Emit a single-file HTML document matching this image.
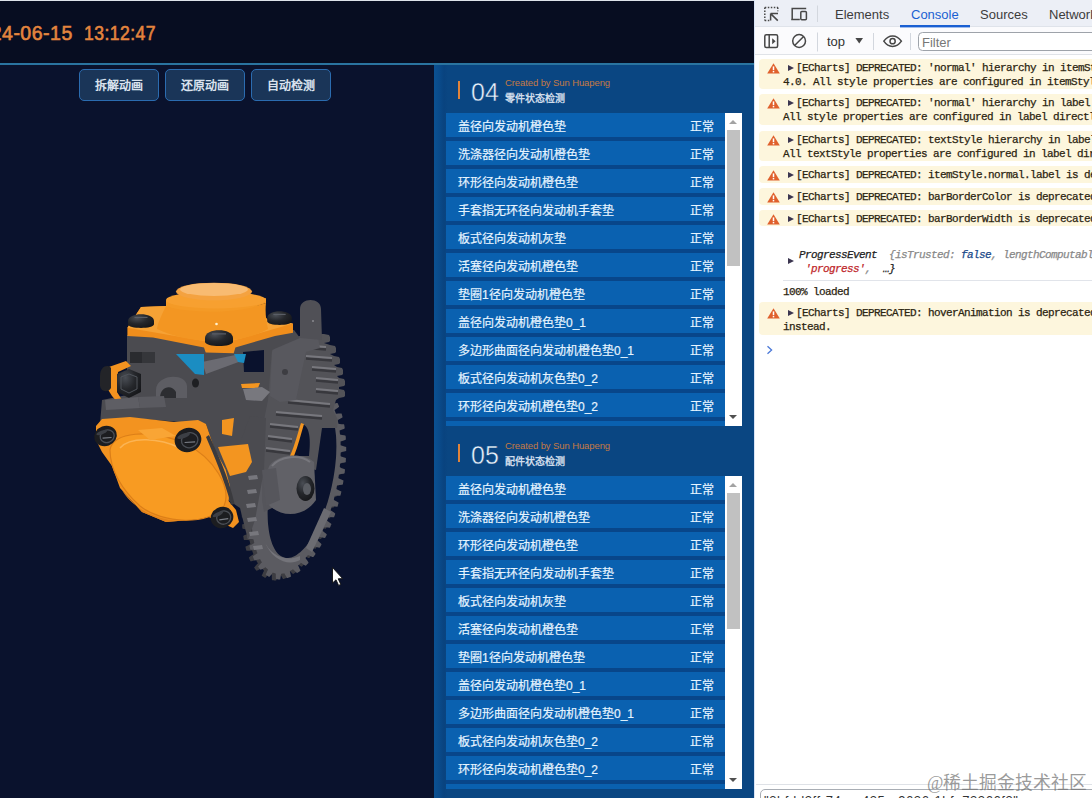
<!DOCTYPE html>
<html lang="zh-CN">
<head>
<meta charset="utf-8">
<style>
*{margin:0;padding:0;box-sizing:border-box}
html,body{width:1092px;height:798px;overflow:hidden;background:#0a122d;font-family:"Liberation Sans",sans-serif}
.abs{position:absolute}
#hdr{left:0;top:0;width:754px;height:63px;background:#070d21;border-top:1px solid #dde2ea}
#line{left:0;top:63px;width:754px;height:2px;background:#2a74a0}
.date{letter-spacing:0.5px;font-size:19.5px;font-weight:normal;-webkit-text-stroke:0.6px #e4853e;color:#e4853e;white-space:pre;transform:scaleX(0.9);transform-origin:0 0}
.btn{top:69px;width:80px;height:32px;border:1px solid #2b6cb0;border-radius:5px;background:#1a3558;color:#d9e2ee;font-size:12px;font-weight:bold;text-align:center;line-height:33px}
#panel{left:434px;top:65px;width:320px;height:733px;background:linear-gradient(90deg,#0b5192 0,#0a4b8b 5px,#09437f 10px,#0a4682 14px,#0a4682 100%)}
.sec-bar{width:2.2px;height:18px;background:#e0833a}
.sec-num{font-size:25px;color:#e8f2fb;line-height:1;-webkit-text-stroke:0.45px #0a4682}
.sec-by{font-size:9.5px;color:#c47a45;letter-spacing:-0.1px;white-space:nowrap;line-height:1}
.sec-tt{font-size:10px;color:#cfdceb;font-weight:bold;white-space:nowrap;line-height:1;margin-top:2px}
.list{left:446px;width:296px;height:313px;overflow:hidden;background:#08468a}
.row{position:absolute;left:0;width:279px;height:24px;background:#0a61b0;color:#e6f4ff;font-size:12px;line-height:24px;-webkit-text-stroke:0.2px #e6f4ff}
.row .n{position:absolute;left:12px;top:2px;white-space:nowrap}
.row .s{position:absolute;right:11px;top:2px}
.sb{position:absolute;left:279px;top:0;width:17px;height:313px;background:#fff}
.thumb{position:absolute;left:2px;top:17px;width:13px;height:136px;background:#c1c1c1}
.up{position:absolute;left:4px;top:7px;width:0;height:0;border-left:4px solid transparent;border-right:4px solid transparent;border-bottom:4px solid #a3a3a3}
.dn{position:absolute;left:4px;bottom:7px;width:0;height:0;border-left:4px solid transparent;border-right:4px solid transparent;border-top:4px solid #505050}
#dt{left:754px;top:0;width:338px;height:798px;background:#fff;overflow:hidden}
.tab{font-size:13px;white-space:nowrap}
.msg{left:5px;width:400px;background:#fdf6dd;border-radius:4px}
.mono{font-family:"Liberation Mono",monospace;font-size:11px;letter-spacing:-0.6px;white-space:pre;color:#2b2410;line-height:14px;-webkit-text-stroke:0.25px currentColor}
</style>
</head>
<body>
<div id="hdr" class="abs"></div>
<div id="line" class="abs"></div>
<div class="abs date" style="left:-32px;top:22px;transform:none">2024-06-15</div><div class="abs date" style="left:84px;top:22px">13:12:47</div>
<div class="btn abs" style="left:79px">拆解动画</div>
<div class="btn abs" style="left:165px">还原动画</div>
<div class="btn abs" style="left:251px">自动检测</div>

<div id="panel" class="abs"></div>

<!-- MODEL -->
<svg class="abs" style="left:0;top:0" width="434" height="798" viewBox="0 0 434 798">
<defs><linearGradient id="og" x1="0" y1="0" x2="1" y2="1"><stop offset="0" stop-color="#f99d28"/><stop offset="1" stop-color="#ef8c1a"/></linearGradient><radialGradient id="bl" cx="0.35" cy="0.3" r="0.8"><stop offset="0" stop-color="#4a4e55"/><stop offset="0.5" stop-color="#25272b"/><stop offset="1" stop-color="#141518"/></radialGradient></defs>
<path d="M337.4 492.6 L337.3 493.2 L337.1 493.8 L337.0 494.4 L336.9 495.0 L336.7 495.6 L336.6 496.2 L336.1 496.8 L333.5 496.8 L330.9 496.8 L330.6 497.3 L330.5 497.9 L330.3 498.5 L330.2 499.1 L330.0 499.7 L329.9 500.3 L330.0 500.9 L332.3 502.2 L334.5 503.4 L334.5 504.1 L334.4 504.7 L334.2 505.3 L334.0 505.9 L333.9 506.5 L333.7 507.1 L333.5 507.7 L330.9 507.5 L328.3 507.4 L327.7 507.8 L327.5 508.4 L327.4 509.0 L327.2 509.6 L327.0 510.1 L326.8 510.7 L326.6 511.3 L328.5 512.5 L330.7 513.9 L331.3 514.7 L331.1 515.3 L330.9 515.9 L330.7 516.5 L330.5 517.0 L330.3 517.6 L330.1 518.2 L328.4 518.2 L325.9 517.9 L324.3 518.0 L324.1 518.5 L323.9 519.1 L323.7 519.6 L323.4 520.2 L323.2 520.7 L323.0 521.3 L323.5 522.1 L325.5 523.5 L327.5 524.9 L327.3 525.5 L327.0 526.1 L326.8 526.6 L326.6 527.1 L326.4 527.7 L326.1 528.2 L325.9 528.8 L323.9 528.6 L321.5 528.2 L320.2 528.2 L319.9 528.7 L319.7 529.2 L319.5 529.7 L319.2 530.2 L319.0 530.7 L318.8 531.3 L318.8 531.9 L320.6 533.4 L322.5 534.9 L322.8 535.7 L322.5 536.2 L322.3 536.7 L322.0 537.2 L321.7 537.7 L321.5 538.2 L321.2 538.7 L320.5 539.0 L318.3 538.4 L316.0 537.9 L315.3 538.1 L315.1 538.6 L314.8 539.1 L314.6 539.6 L314.3 540.0 L314.1 540.5 L313.8 541.0 L313.7 541.5 L315.3 543.0 L317.0 544.6 L317.5 545.5 L317.3 546.0 L317.0 546.5 L316.7 546.9 L316.4 547.4 L316.2 547.9 L315.9 548.3 L315.6 548.8 L314.3 548.5 L312.2 547.9 L310.1 547.2 L309.9 547.6 L309.6 548.0 L309.3 548.4 L309.0 548.9 L308.8 549.3 L308.5 549.7 L308.2 550.1 L308.0 550.5 L309.0 551.8 L310.4 553.3 L311.6 554.8 L311.3 555.2 L311.1 555.7 L310.8 556.1 L310.5 556.5 L310.2 556.9 L309.9 557.3 L309.6 557.7 L309.3 558.1 L308.3 557.9 L306.4 557.1 L304.6 556.2 L303.8 556.2 L303.5 556.5 L303.2 556.9 L302.9 557.2 L302.6 557.6 L302.4 557.9 L302.1 558.3 L301.8 558.6 L301.5 558.9 L302.1 560.1 L303.3 561.6 L304.4 563.2 L304.5 563.9 L304.2 564.3 L303.9 564.6 L303.6 564.9 L303.2 565.3 L302.9 565.6 L302.6 565.9 L302.3 566.2 L302.0 566.5 L301.5 566.7 L299.9 565.7 L298.4 564.7 L296.9 563.8 L296.7 564.1 L296.4 564.4 L296.1 564.7 L295.8 564.9 L295.5 565.2 L295.2 565.4 L294.9 565.7 L294.6 565.9 L294.4 566.2 L294.1 566.4 L294.8 567.8 L295.5 569.4 L296.3 570.9 L296.4 571.7 L296.1 571.9 L295.8 572.2 L295.5 572.4 L295.1 572.7 L294.8 572.9 L294.5 573.1 L294.2 573.4 L293.9 573.6 L293.6 573.8 L293.2 574.0 L292.3 573.4 L291.2 572.3 L290.0 571.2 L289.0 570.2 L288.7 570.4 L288.4 570.6 L288.2 570.8 L287.9 570.9 L287.6 571.1 L287.3 571.3 L287.1 571.4 L286.8 571.6 L286.5 571.7 L286.3 571.9 L286.0 572.0 L285.9 572.6 L286.3 574.0 L286.6 575.4 L286.9 576.8 L286.9 577.7 L286.6 577.8 L286.3 577.9 L286.0 578.1 L285.7 578.2 L285.4 578.3 L285.1 578.5 L284.8 578.6 L284.4 578.7 L284.1 578.8 L283.8 578.9 L283.5 579.0 L283.2 579.1 L282.6 578.4 L282.0 577.2 L281.3 576.0 L280.7 574.9 L280.3 574.2 L280.0 574.3 L279.8 574.4 L279.5 574.4 L279.3 574.5 L279.0 574.5 L278.8 574.6 L278.6 574.6 L278.3 574.6 L278.1 574.7 L277.8 574.7 L277.6 574.7 L277.4 574.8 L277.1 574.8 L277.0 575.6 L276.8 576.9 L276.6 578.1 L276.4 579.3 L276.2 580.4 L275.9 580.4 L275.6 580.4 L275.3 580.4 L275.0 580.4 L274.7 580.4 L274.4 580.4 L274.1 580.4 L273.8 580.3 L273.5 580.3 L273.2 580.3 L272.9 580.3 L272.6 580.2 L272.3 580.2 L272.0 580.1 L271.9 579.4 L271.8 578.1 L271.8 576.9 L271.8 575.7 L271.8 574.5 L271.6 574.5 L271.4 574.4 L271.2 574.4 L270.9 574.3 L270.7 574.2 L270.5 574.2 L270.3 574.1 L270.1 574.0 L269.9 574.0 L269.7 573.9 L269.5 573.8 L269.3 573.7 L269.1 573.7 L268.9 573.6 L268.5 573.9 L267.8 574.9 L267.0 575.9 L266.2 576.9 L265.4 577.8 L265.1 577.9 L264.8 577.7 L264.6 577.6 L264.3 577.4 L264.0 577.3 L263.8 577.1 L263.5 577.0 L263.3 576.8 L263.0 576.6 L262.7 576.5 L262.5 576.3 L262.2 576.1 L262.0 575.9 L261.7 575.7 L262.1 574.7 L262.7 573.5 L263.2 572.3 L263.8 571.2 L264.0 570.5 L263.8 570.4 L263.6 570.2 L263.4 570.0 L263.2 569.8 L263.0 569.7 L262.8 569.5 L262.6 569.3 L262.4 569.1 L262.2 568.9 L262.0 568.7 L261.9 568.5 L261.7 568.3 L261.0 568.6 L259.7 569.3 L258.5 569.9 L257.2 570.6 L256.5 570.7 L256.3 570.5 L256.0 570.2 L255.8 569.9 L255.6 569.7 L255.4 569.4 L255.2 569.1 L255.0 568.8 L254.8 568.5 L254.5 568.2 L254.3 567.9 L254.1 567.6 L254.6 566.9 L255.6 565.7 L256.7 564.6 L257.8 563.5 L257.8 563.1 L257.6 562.9 L257.4 562.6 L257.3 562.3 L257.1 562.0 L256.9 561.7 L256.7 561.4 L256.6 561.1 L256.4 560.8 L256.2 560.5 L256.1 560.1 L254.8 560.4 L253.1 560.8 L251.5 561.2 L250.5 561.2 L250.3 560.9 L250.1 560.5 L249.9 560.1 L249.8 559.8 L249.6 559.4 L249.4 559.0 L249.3 558.6 L249.1 558.2 L248.9 557.8 L248.9 557.4 L250.4 556.3 L251.9 555.3 L253.4 554.3 L253.3 553.9 L253.2 553.5 L253.0 553.1 L252.9 552.8 L252.7 552.4 L252.6 552.0 L252.5 551.6 L252.3 551.2 L252.2 550.8 L251.6 550.5 L249.7 550.7 L247.8 550.8 L246.4 550.7 L246.3 550.3 L246.2 549.9 L246.0 549.4 L245.9 549.0 L245.8 548.5 L245.7 548.1 L245.6 547.6 L245.4 547.1 L245.6 546.6 L247.4 545.7 L249.2 544.8 L250.3 544.0 L250.2 543.6 L250.1 543.1 L250.0 542.7 L249.9 542.2 L249.8 541.8 L249.7 541.3 L249.6 540.8 L249.6 540.4 L248.2 540.1 L246.1 540.0 L244.0 539.9 L243.8 539.4 L243.7 538.9 L243.6 538.4 L243.5 537.9 L243.5 537.4 L243.4 536.9 L243.3 536.4 L243.2 535.9 L244.3 535.2 L246.4 534.4 L248.4 533.6 L248.4 533.1 L248.3 532.6 L248.3 532.1 L248.2 531.6 L248.2 531.1 L248.1 530.6 L248.0 530.1 L248.0 529.6 L245.9 529.2 L243.7 528.9 L242.4 528.5 L242.3 527.9 L242.3 527.4 L242.2 526.8 L242.2 526.3 L242.2 525.7 L242.1 525.2 L242.1 524.6 L243.5 524.0 L245.7 523.3 L247.5 522.7 L247.5 522.2 L247.4 521.6 L247.4 521.1 L247.4 520.5 L247.4 520.0 L247.4 519.4 L247.3 518.9 L245.9 518.4 L243.6 517.8 L241.8 517.3 L241.8 516.7 L241.8 516.1 L241.8 515.6 L241.8 515.0 L241.8 514.4 L241.8 513.8 L241.8 513.2 L243.8 512.7 L246.2 512.1 L247.3 511.6 L247.3 511.0 L247.4 510.5 L247.4 509.9 L247.4 509.3 L247.4 508.7 L247.4 508.2 L246.9 507.6 L244.5 506.9 L242.1 506.2 L242.1 505.6 L242.1 505.0 L242.1 504.4 L242.2 503.8 L242.2 503.2 L242.2 502.6 L242.3 502.0 L244.4 501.5 L246.9 501.1 L247.9 500.6 L248.0 500.0 L248.0 499.4 L248.1 498.8 L248.1 498.2 L248.2 497.7 L248.2 497.1 L246.9 496.3 L244.5 495.5 L242.9 494.7 L243.0 494.1 L243.1 493.5 L243.2 492.9 L243.2 492.2 L243.3 491.6 L243.4 491.0 L244.4 490.5 L246.9 490.2 L249.1 489.9 L249.2 489.3 L249.2 488.7 L249.3 488.1 L249.4 487.5 L249.5 486.9 L249.6 486.3 L249.1 485.6 L246.7 484.6 L244.5 483.7 L244.6 483.0 L244.7 482.4 L244.8 481.8 L244.9 481.2 L245.0 480.6 L245.1 480.0 L245.7 479.4 L248.3 479.3 L250.8 479.2 L251.0 478.6 L251.1 478.0 L251.2 477.4 L251.3 476.8 L251.4 476.2 L251.6 475.6 L251.3 474.9 L248.9 473.8 L246.6 472.6 L246.7 472.0 L246.9 471.4 L247.0 470.8 L247.1 470.2 L247.3 469.6 L247.4 469.0 L247.9 468.4 L250.5 468.4 L253.1 468.4 L253.4 467.9 L253.5 467.3 L253.7 466.7 L253.8 466.1 L254.0 465.5 L254.1 464.9 L254.0 464.3 L251.7 463.0 L249.5 461.8 L249.5 461.1 L249.6 460.5 L249.8 459.9 L250.0 459.3 L250.1 458.7 L250.3 458.1 L250.5 457.5 L253.1 457.7 L255.7 457.8 L256.3 457.4 L256.5 456.8 L256.6 456.2 L256.8 455.6 L257.0 455.1 L257.2 454.5 L257.4 453.9 L255.5 452.7 L253.3 451.3 L252.7 450.5 L252.9 449.9 L253.1 449.3 L253.3 448.7 L253.5 448.2 L253.7 447.6 L253.9 447.0 L255.6 447.0 L258.1 447.3 L259.7 447.2 L259.9 446.7 L260.1 446.1 L260.3 445.6 L260.6 445.0 L260.8 444.5 L261.0 443.9 L260.5 443.1 L258.5 441.7 L256.5 440.3 L256.7 439.7 L257.0 439.1 L257.2 438.6 L257.4 438.1 L257.6 437.5 L257.9 437.0 L258.1 436.4 L260.1 436.6 L262.5 437.0 L263.8 437.0 L264.1 436.5 L264.3 436.0 L264.5 435.5 L264.8 435.0 L265.0 434.5 L265.2 433.9 L265.2 433.3 L263.4 431.8 L261.5 430.3 L261.2 429.5 L261.5 429.0 L261.7 428.5 L262.0 428.0 L262.3 427.5 L262.5 427.0 L262.8 426.5 L263.5 426.2 L265.7 426.8 L268.0 427.3 L268.7 427.1 L268.9 426.6 L269.2 426.1 L269.4 425.6 L269.7 425.2 L269.9 424.7 L270.2 424.2 L270.3 423.7 L268.7 422.2 L267.0 420.6 L266.5 419.7 L266.7 419.2 L267.0 418.7 L267.3 418.3 L267.6 417.8 L267.8 417.3 L268.1 416.9 L268.4 416.4 L269.7 416.7 L271.8 417.3 L273.9 418.0 L274.1 417.6 L274.4 417.2 L274.7 416.8 L275.0 416.3 L275.2 415.9 L275.5 415.5 L275.8 415.1 L276.0 414.7 L275.0 413.4 L273.6 411.9 L272.4 410.4 L272.7 410.0 L272.9 409.5 L273.2 409.1 L273.5 408.7 L273.8 408.3 L274.1 407.9 L274.4 407.5 L274.7 407.1 L275.7 407.3 L277.6 408.1 L279.4 409.0 L280.2 409.0 L280.5 408.7 L280.8 408.3 L281.1 408.0 L281.4 407.6 L281.6 407.3 L281.9 406.9 L282.2 406.6 L282.5 406.3 L281.9 405.1 L280.7 403.6 L279.6 402.0 L279.5 401.3 L279.8 400.9 L280.1 400.6 L280.4 400.3 L280.8 399.9 L281.1 399.6 L281.4 399.3 L281.7 399.0 L282.0 398.7 L282.5 398.5 L284.1 399.5 L285.6 400.5 L287.1 401.4 L287.3 401.1 L287.6 400.8 L287.9 400.5 L288.2 400.3 L288.5 400.0 L288.8 399.8 L289.1 399.5 L289.4 399.3 L289.6 399.0 L289.9 398.8 L289.2 397.4 L288.5 395.8 L287.7 394.3 L287.6 393.5 L287.9 393.3 L288.2 393.0 L288.5 392.8 L288.9 392.5 L289.2 392.3 L289.5 392.1 L289.8 391.8 L290.1 391.6 L290.4 391.4 L290.8 391.2 L291.7 391.8 L292.8 392.9 L294.0 394.0 L295.0 395.0 L295.3 394.8 L295.6 394.6 L295.8 394.4 L296.1 394.3 L296.4 394.1 L296.7 393.9 L296.9 393.8 L297.2 393.6 L297.5 393.5 L297.7 393.3 L298.0 393.2 L298.1 392.6 L297.7 391.2 L297.4 389.8 L297.1 388.4 L297.1 387.5 L297.4 387.4 L297.7 387.3 L298.0 387.1 L298.3 387.0 L298.6 386.9 L298.9 386.7 L299.2 386.6 L299.6 386.5 L299.9 386.4 L300.2 386.3 L300.5 386.2 L300.8 386.1 L301.4 386.8 L302.0 388.0 L302.7 389.2 L303.3 390.3 L303.7 391.0 L304.0 390.9 L304.2 390.8 L304.5 390.8 L304.7 390.7 L305.0 390.7 L305.2 390.6 L305.4 390.6 L305.7 390.6 L305.9 390.5 L306.2 390.5 L306.4 390.5 L306.6 390.4 L306.9 390.4 L307.0 389.6 L307.2 388.3 L307.4 387.1 L307.6 385.9 L307.8 384.8 L308.1 384.8 L308.4 384.8 L308.7 384.8 L309.0 384.8 L309.3 384.8 L309.6 384.8 L309.9 384.8 L310.2 384.9 L310.5 384.9 L310.8 384.9 L311.1 384.9 L311.4 385.0 L311.7 385.0 L312.0 385.1 L312.1 385.8 L312.2 387.1 L312.2 388.3 L312.2 389.5 L312.2 390.7 L312.4 390.7 L312.6 390.8 L312.8 390.8 L313.1 390.9 L313.3 391.0 L313.5 391.0 L313.7 391.1 L313.9 391.2 L314.1 391.2 L314.3 391.3 L314.5 391.4 L314.7 391.5 L314.9 391.5 L315.1 391.6 L315.5 391.3 L316.2 390.3 L317.0 389.3 L317.8 388.3 L318.6 387.4 L318.9 387.3 L319.2 387.5 L319.4 387.6 L319.7 387.8 L320.0 387.9 L320.2 388.1 L320.5 388.2 L320.7 388.4 L321.0 388.6 L321.3 388.7 L321.5 388.9 L321.8 389.1 L322.0 389.3 L322.3 389.5 L321.9 390.5 L321.3 391.7 L320.8 392.9 L320.2 394.0 L320.0 394.7 L320.2 394.8 L320.4 395.0 L320.6 395.2 L320.8 395.4 L321.0 395.5 L321.2 395.7 L321.4 395.9 L321.6 396.1 L321.8 396.3 L322.0 396.5 L322.1 396.7 L322.3 396.9 L323.0 396.6 L324.3 395.9 L325.5 395.3 L326.8 394.6 L327.5 394.5 L327.7 394.7 L328.0 395.0 L328.2 395.3 L328.4 395.5 L328.6 395.8 L328.8 396.1 L329.0 396.4 L329.2 396.7 L329.5 397.0 L329.7 397.3 L329.9 397.6 L329.4 398.3 L328.4 399.5 L327.3 400.6 L326.2 401.7 L326.2 402.1 L326.4 402.3 L326.6 402.6 L326.7 402.9 L326.9 403.2 L327.1 403.5 L327.3 403.8 L327.4 404.1 L327.6 404.4 L327.8 404.7 L327.9 405.1 L329.2 404.8 L330.9 404.4 L332.5 404.0 L333.5 404.0 L333.7 404.3 L333.9 404.7 L334.1 405.1 L334.2 405.4 L334.4 405.8 L334.6 406.2 L334.7 406.6 L334.9 407.0 L335.1 407.4 L335.1 407.8 L333.6 408.9 L332.1 409.9 L330.6 410.9 L330.7 411.3 L330.8 411.7 L331.0 412.1 L331.1 412.4 L331.3 412.8 L331.4 413.2 L331.5 413.6 L331.7 414.0 L331.8 414.4 L332.4 414.7 L334.3 414.5 L336.2 414.4 L337.6 414.5 L337.7 414.9 L337.8 415.3 L338.0 415.8 L338.1 416.2 L338.2 416.7 L338.3 417.1 L338.4 417.6 L338.6 418.1 L338.4 418.6 L336.6 419.5 L334.8 420.4 L333.7 421.2 L333.8 421.6 L333.9 422.1 L334.0 422.5 L334.1 423.0 L334.2 423.4 L334.3 423.9 L334.4 424.4 L334.4 424.8 L335.8 425.1 L337.9 425.2 L340.0 425.3 L340.2 425.8 L340.3 426.3 L340.4 426.8 L340.5 427.3 L340.5 427.8 L340.6 428.3 L340.7 428.8 L340.8 429.3 L339.7 430.0 L337.6 430.8 L335.6 431.6 L335.6 432.1 L335.7 432.6 L335.7 433.1 L335.8 433.6 L335.8 434.1 L335.9 434.6 L336.0 435.1 L336.0 435.6 L338.1 436.0 L340.3 436.3 L341.6 436.7 L341.7 437.3 L341.7 437.8 L341.8 438.4 L341.8 438.9 L341.8 439.5 L341.9 440.0 L341.9 440.6 L340.5 441.2 L338.3 441.9 L336.5 442.5 L336.5 443.0 L336.6 443.6 L336.6 444.1 L336.6 444.7 L336.6 445.2 L336.6 445.8 L336.7 446.3 L338.1 446.8 L340.4 447.4 L342.2 447.9 L342.2 448.5 L342.2 449.1 L342.2 449.6 L342.2 450.2 L342.2 450.8 L342.2 451.4 L342.2 452.0 L340.2 452.5 L337.8 453.1 L336.7 453.6 L336.7 454.2 L336.6 454.7 L336.6 455.3 L336.6 455.9 L336.6 456.5 L336.6 457.0 L337.1 457.6 L339.5 458.3 L341.9 459.0 L341.9 459.6 L341.9 460.2 L341.9 460.8 L341.8 461.4 L341.8 462.0 L341.8 462.6 L341.7 463.2 L339.6 463.7 L337.1 464.1 L336.1 464.6 L336.0 465.2 L336.0 465.8 L335.9 466.4 L335.9 467.0 L335.8 467.5 L335.8 468.1 L337.1 468.9 L339.5 469.7 L341.1 470.5 L341.0 471.1 L340.9 471.7 L340.8 472.3 L340.8 473.0 L340.7 473.6 L340.6 474.2 L339.6 474.7 L337.1 475.0 L334.9 475.3 L334.8 475.9 L334.8 476.5 L334.7 477.1 L334.6 477.7 L334.5 478.3 L334.4 478.9 L334.9 479.6 L337.3 480.6 L339.5 481.5 L339.4 482.2 L339.3 482.8 L339.2 483.4 L339.1 484.0 L339.0 484.6 L338.9 485.2 L338.3 485.8 L335.7 485.9 L333.2 486.0 L333.0 486.6 L332.9 487.2 L332.8 487.8 L332.7 488.4 L332.6 489.0 L332.4 489.6 L332.7 490.3 L335.1 491.4Z" fill="#3d3d42"/>
<path d="M341.4 491.6 L341.3 492.2 L341.1 492.8 L341.0 493.4 L340.9 494.0 L340.7 494.6 L340.6 495.2 L340.1 495.8 L337.5 495.8 L334.9 495.8 L334.6 496.3 L334.5 496.9 L334.3 497.5 L334.2 498.1 L334.0 498.7 L333.9 499.3 L334.0 499.9 L336.3 501.2 L338.5 502.4 L338.5 503.1 L338.4 503.7 L338.2 504.3 L338.0 504.9 L337.9 505.5 L337.7 506.1 L337.5 506.7 L334.9 506.5 L332.3 506.4 L331.7 506.8 L331.5 507.4 L331.4 508.0 L331.2 508.6 L331.0 509.1 L330.8 509.7 L330.6 510.3 L332.5 511.5 L334.7 512.9 L335.3 513.7 L335.1 514.3 L334.9 514.9 L334.7 515.5 L334.5 516.0 L334.3 516.6 L334.1 517.2 L332.4 517.2 L329.9 516.9 L328.3 517.0 L328.1 517.5 L327.9 518.1 L327.7 518.6 L327.4 519.2 L327.2 519.7 L327.0 520.3 L327.5 521.1 L329.5 522.5 L331.5 523.9 L331.3 524.5 L331.0 525.1 L330.8 525.6 L330.6 526.1 L330.4 526.7 L330.1 527.2 L329.9 527.8 L327.9 527.6 L325.5 527.2 L324.2 527.2 L323.9 527.7 L323.7 528.2 L323.5 528.7 L323.2 529.2 L323.0 529.7 L322.8 530.3 L322.8 530.9 L324.6 532.4 L326.5 533.9 L326.8 534.7 L326.5 535.2 L326.3 535.7 L326.0 536.2 L325.7 536.7 L325.5 537.2 L325.2 537.7 L324.5 538.0 L322.3 537.4 L320.0 536.9 L319.3 537.1 L319.1 537.6 L318.8 538.1 L318.6 538.6 L318.3 539.0 L318.1 539.5 L317.8 540.0 L317.7 540.5 L319.3 542.0 L321.0 543.6 L321.5 544.5 L321.3 545.0 L321.0 545.5 L320.7 545.9 L320.4 546.4 L320.2 546.9 L319.9 547.3 L319.6 547.8 L318.3 547.5 L316.2 546.9 L314.1 546.2 L313.9 546.6 L313.6 547.0 L313.3 547.4 L313.0 547.9 L312.8 548.3 L312.5 548.7 L312.2 549.1 L312.0 549.5 L313.0 550.8 L314.4 552.3 L315.6 553.8 L315.3 554.2 L315.1 554.7 L314.8 555.1 L314.5 555.5 L314.2 555.9 L313.9 556.3 L313.6 556.7 L313.3 557.1 L312.3 556.9 L310.4 556.1 L308.6 555.2 L307.8 555.2 L307.5 555.5 L307.2 555.9 L306.9 556.2 L306.6 556.6 L306.4 556.9 L306.1 557.3 L305.8 557.6 L305.5 557.9 L306.1 559.1 L307.3 560.6 L308.4 562.2 L308.5 562.9 L308.2 563.3 L307.9 563.6 L307.6 563.9 L307.2 564.3 L306.9 564.6 L306.6 564.9 L306.3 565.2 L306.0 565.5 L305.5 565.7 L303.9 564.7 L302.4 563.7 L300.9 562.8 L300.7 563.1 L300.4 563.4 L300.1 563.7 L299.8 563.9 L299.5 564.2 L299.2 564.4 L298.9 564.7 L298.6 564.9 L298.4 565.2 L298.1 565.4 L298.8 566.8 L299.5 568.4 L300.3 569.9 L300.4 570.7 L300.1 570.9 L299.8 571.2 L299.5 571.4 L299.1 571.7 L298.8 571.9 L298.5 572.1 L298.2 572.4 L297.9 572.6 L297.6 572.8 L297.2 573.0 L296.3 572.4 L295.2 571.3 L294.0 570.2 L293.0 569.2 L292.7 569.4 L292.4 569.6 L292.2 569.8 L291.9 569.9 L291.6 570.1 L291.3 570.3 L291.1 570.4 L290.8 570.6 L290.5 570.7 L290.3 570.9 L290.0 571.0 L289.9 571.6 L290.3 573.0 L290.6 574.4 L290.9 575.8 L290.9 576.7 L290.6 576.8 L290.3 576.9 L290.0 577.1 L289.7 577.2 L289.4 577.3 L289.1 577.5 L288.8 577.6 L288.4 577.7 L288.1 577.8 L287.8 577.9 L287.5 578.0 L287.2 578.1 L286.6 577.4 L286.0 576.2 L285.3 575.0 L284.7 573.9 L284.3 573.2 L284.0 573.3 L283.8 573.4 L283.5 573.4 L283.3 573.5 L283.0 573.5 L282.8 573.6 L282.6 573.6 L282.3 573.6 L282.1 573.7 L281.8 573.7 L281.6 573.7 L281.4 573.8 L281.1 573.8 L281.0 574.6 L280.8 575.9 L280.6 577.1 L280.4 578.3 L280.2 579.4 L279.9 579.4 L279.6 579.4 L279.3 579.4 L279.0 579.4 L278.7 579.4 L278.4 579.4 L278.1 579.4 L277.8 579.3 L277.5 579.3 L277.2 579.3 L276.9 579.3 L276.6 579.2 L276.3 579.2 L276.0 579.1 L275.9 578.4 L275.8 577.1 L275.8 575.9 L275.8 574.7 L275.8 573.5 L275.6 573.5 L275.4 573.4 L275.2 573.4 L274.9 573.3 L274.7 573.2 L274.5 573.2 L274.3 573.1 L274.1 573.0 L273.9 573.0 L273.7 572.9 L273.5 572.8 L273.3 572.7 L273.1 572.7 L272.9 572.6 L272.5 572.9 L271.8 573.9 L271.0 574.9 L270.2 575.9 L269.4 576.8 L269.1 576.9 L268.8 576.7 L268.6 576.6 L268.3 576.4 L268.0 576.3 L267.8 576.1 L267.5 576.0 L267.3 575.8 L267.0 575.6 L266.7 575.5 L266.5 575.3 L266.2 575.1 L266.0 574.9 L265.7 574.7 L266.1 573.7 L266.7 572.5 L267.2 571.3 L267.8 570.2 L268.0 569.5 L267.8 569.4 L267.6 569.2 L267.4 569.0 L267.2 568.8 L267.0 568.7 L266.8 568.5 L266.6 568.3 L266.4 568.1 L266.2 567.9 L266.0 567.7 L265.9 567.5 L265.7 567.3 L265.0 567.6 L263.7 568.3 L262.5 568.9 L261.2 569.6 L260.5 569.7 L260.3 569.5 L260.0 569.2 L259.8 568.9 L259.6 568.7 L259.4 568.4 L259.2 568.1 L259.0 567.8 L258.8 567.5 L258.5 567.2 L258.3 566.9 L258.1 566.6 L258.6 565.9 L259.6 564.7 L260.7 563.6 L261.8 562.5 L261.8 562.1 L261.6 561.9 L261.4 561.6 L261.3 561.3 L261.1 561.0 L260.9 560.7 L260.7 560.4 L260.6 560.1 L260.4 559.8 L260.2 559.5 L260.1 559.1 L258.8 559.4 L257.1 559.8 L255.5 560.2 L254.5 560.2 L254.3 559.9 L254.1 559.5 L253.9 559.1 L253.8 558.8 L253.6 558.4 L253.4 558.0 L253.3 557.6 L253.1 557.2 L252.9 556.8 L252.9 556.4 L254.4 555.3 L255.9 554.3 L257.4 553.3 L257.3 552.9 L257.2 552.5 L257.0 552.1 L256.9 551.8 L256.7 551.4 L256.6 551.0 L256.5 550.6 L256.3 550.2 L256.2 549.8 L255.6 549.5 L253.7 549.7 L251.8 549.8 L250.4 549.7 L250.3 549.3 L250.2 548.9 L250.0 548.4 L249.9 548.0 L249.8 547.5 L249.7 547.1 L249.6 546.6 L249.4 546.1 L249.6 545.6 L251.4 544.7 L253.2 543.8 L254.3 543.0 L254.2 542.6 L254.1 542.1 L254.0 541.7 L253.9 541.2 L253.8 540.8 L253.7 540.3 L253.6 539.8 L253.6 539.4 L252.2 539.1 L250.1 539.0 L248.0 538.9 L247.8 538.4 L247.7 537.9 L247.6 537.4 L247.5 536.9 L247.5 536.4 L247.4 535.9 L247.3 535.4 L247.2 534.9 L248.3 534.2 L250.4 533.4 L252.4 532.6 L252.4 532.1 L252.3 531.6 L252.3 531.1 L252.2 530.6 L252.2 530.1 L252.1 529.6 L252.0 529.1 L252.0 528.6 L249.9 528.2 L247.7 527.9 L246.4 527.5 L246.3 526.9 L246.3 526.4 L246.2 525.8 L246.2 525.3 L246.2 524.7 L246.1 524.2 L246.1 523.6 L247.5 523.0 L249.7 522.3 L251.5 521.7 L251.5 521.2 L251.4 520.6 L251.4 520.1 L251.4 519.5 L251.4 519.0 L251.4 518.4 L251.3 517.9 L249.9 517.4 L247.6 516.8 L245.8 516.3 L245.8 515.7 L245.8 515.1 L245.8 514.6 L245.8 514.0 L245.8 513.4 L245.8 512.8 L245.8 512.2 L247.8 511.7 L250.2 511.1 L251.3 510.6 L251.3 510.0 L251.4 509.5 L251.4 508.9 L251.4 508.3 L251.4 507.7 L251.4 507.2 L250.9 506.6 L248.5 505.9 L246.1 505.2 L246.1 504.6 L246.1 504.0 L246.1 503.4 L246.2 502.8 L246.2 502.2 L246.2 501.6 L246.3 501.0 L248.4 500.5 L250.9 500.1 L251.9 499.6 L252.0 499.0 L252.0 498.4 L252.1 497.8 L252.1 497.2 L252.2 496.7 L252.2 496.1 L250.9 495.3 L248.5 494.5 L246.9 493.7 L247.0 493.1 L247.1 492.5 L247.2 491.9 L247.2 491.2 L247.3 490.6 L247.4 490.0 L248.4 489.5 L250.9 489.2 L253.1 488.9 L253.2 488.3 L253.2 487.7 L253.3 487.1 L253.4 486.5 L253.5 485.9 L253.6 485.3 L253.1 484.6 L250.7 483.6 L248.5 482.7 L248.6 482.0 L248.7 481.4 L248.8 480.8 L248.9 480.2 L249.0 479.6 L249.1 479.0 L249.7 478.4 L252.3 478.3 L254.8 478.2 L255.0 477.6 L255.1 477.0 L255.2 476.4 L255.3 475.8 L255.4 475.2 L255.6 474.6 L255.3 473.9 L252.9 472.8 L250.6 471.6 L250.7 471.0 L250.9 470.4 L251.0 469.8 L251.1 469.2 L251.3 468.6 L251.4 468.0 L251.9 467.4 L254.5 467.4 L257.1 467.4 L257.4 466.9 L257.5 466.3 L257.7 465.7 L257.8 465.1 L258.0 464.5 L258.1 463.9 L258.0 463.3 L255.7 462.0 L253.5 460.8 L253.5 460.1 L253.6 459.5 L253.8 458.9 L254.0 458.3 L254.1 457.7 L254.3 457.1 L254.5 456.5 L257.1 456.7 L259.7 456.8 L260.3 456.4 L260.5 455.8 L260.6 455.2 L260.8 454.6 L261.0 454.1 L261.2 453.5 L261.4 452.9 L259.5 451.7 L257.3 450.3 L256.7 449.5 L256.9 448.9 L257.1 448.3 L257.3 447.7 L257.5 447.2 L257.7 446.6 L257.9 446.0 L259.6 446.0 L262.1 446.3 L263.7 446.2 L263.9 445.7 L264.1 445.1 L264.3 444.6 L264.6 444.0 L264.8 443.5 L265.0 442.9 L264.5 442.1 L262.5 440.7 L260.5 439.3 L260.7 438.7 L261.0 438.1 L261.2 437.6 L261.4 437.1 L261.6 436.5 L261.9 436.0 L262.1 435.4 L264.1 435.6 L266.5 436.0 L267.8 436.0 L268.1 435.5 L268.3 435.0 L268.5 434.5 L268.8 434.0 L269.0 433.5 L269.2 432.9 L269.2 432.3 L267.4 430.8 L265.5 429.3 L265.2 428.5 L265.5 428.0 L265.7 427.5 L266.0 427.0 L266.3 426.5 L266.5 426.0 L266.8 425.5 L267.5 425.2 L269.7 425.8 L272.0 426.3 L272.7 426.1 L272.9 425.6 L273.2 425.1 L273.4 424.6 L273.7 424.2 L273.9 423.7 L274.2 423.2 L274.3 422.7 L272.7 421.2 L271.0 419.6 L270.5 418.7 L270.7 418.2 L271.0 417.7 L271.3 417.3 L271.6 416.8 L271.8 416.3 L272.1 415.9 L272.4 415.4 L273.7 415.7 L275.8 416.3 L277.9 417.0 L278.1 416.6 L278.4 416.2 L278.7 415.8 L279.0 415.3 L279.2 414.9 L279.5 414.5 L279.8 414.1 L280.0 413.7 L279.0 412.4 L277.6 410.9 L276.4 409.4 L276.7 409.0 L276.9 408.5 L277.2 408.1 L277.5 407.7 L277.8 407.3 L278.1 406.9 L278.4 406.5 L278.7 406.1 L279.7 406.3 L281.6 407.1 L283.4 408.0 L284.2 408.0 L284.5 407.7 L284.8 407.3 L285.1 407.0 L285.4 406.6 L285.6 406.3 L285.9 405.9 L286.2 405.6 L286.5 405.3 L285.9 404.1 L284.7 402.6 L283.6 401.0 L283.5 400.3 L283.8 399.9 L284.1 399.6 L284.4 399.3 L284.8 398.9 L285.1 398.6 L285.4 398.3 L285.7 398.0 L286.0 397.7 L286.5 397.5 L288.1 398.5 L289.6 399.5 L291.1 400.4 L291.3 400.1 L291.6 399.8 L291.9 399.5 L292.2 399.3 L292.5 399.0 L292.8 398.8 L293.1 398.5 L293.4 398.3 L293.6 398.0 L293.9 397.8 L293.2 396.4 L292.5 394.8 L291.7 393.3 L291.6 392.5 L291.9 392.3 L292.2 392.0 L292.5 391.8 L292.9 391.5 L293.2 391.3 L293.5 391.1 L293.8 390.8 L294.1 390.6 L294.4 390.4 L294.8 390.2 L295.7 390.8 L296.8 391.9 L298.0 393.0 L299.0 394.0 L299.3 393.8 L299.6 393.6 L299.8 393.4 L300.1 393.3 L300.4 393.1 L300.7 392.9 L300.9 392.8 L301.2 392.6 L301.5 392.5 L301.7 392.3 L302.0 392.2 L302.1 391.6 L301.7 390.2 L301.4 388.8 L301.1 387.4 L301.1 386.5 L301.4 386.4 L301.7 386.3 L302.0 386.1 L302.3 386.0 L302.6 385.9 L302.9 385.7 L303.2 385.6 L303.6 385.5 L303.9 385.4 L304.2 385.3 L304.5 385.2 L304.8 385.1 L305.4 385.8 L306.0 387.0 L306.7 388.2 L307.3 389.3 L307.7 390.0 L308.0 389.9 L308.2 389.8 L308.5 389.8 L308.7 389.7 L309.0 389.7 L309.2 389.6 L309.4 389.6 L309.7 389.6 L309.9 389.5 L310.2 389.5 L310.4 389.5 L310.6 389.4 L310.9 389.4 L311.0 388.6 L311.2 387.3 L311.4 386.1 L311.6 384.9 L311.8 383.8 L312.1 383.8 L312.4 383.8 L312.7 383.8 L313.0 383.8 L313.3 383.8 L313.6 383.8 L313.9 383.8 L314.2 383.9 L314.5 383.9 L314.8 383.9 L315.1 383.9 L315.4 384.0 L315.7 384.0 L316.0 384.1 L316.1 384.8 L316.2 386.1 L316.2 387.3 L316.2 388.5 L316.2 389.7 L316.4 389.7 L316.6 389.8 L316.8 389.8 L317.1 389.9 L317.3 390.0 L317.5 390.0 L317.7 390.1 L317.9 390.2 L318.1 390.2 L318.3 390.3 L318.5 390.4 L318.7 390.5 L318.9 390.5 L319.1 390.6 L319.5 390.3 L320.2 389.3 L321.0 388.3 L321.8 387.3 L322.6 386.4 L322.9 386.3 L323.2 386.5 L323.4 386.6 L323.7 386.8 L324.0 386.9 L324.2 387.1 L324.5 387.2 L324.7 387.4 L325.0 387.6 L325.3 387.7 L325.5 387.9 L325.8 388.1 L326.0 388.3 L326.3 388.5 L325.9 389.5 L325.3 390.7 L324.8 391.9 L324.2 393.0 L324.0 393.7 L324.2 393.8 L324.4 394.0 L324.6 394.2 L324.8 394.4 L325.0 394.5 L325.2 394.7 L325.4 394.9 L325.6 395.1 L325.8 395.3 L326.0 395.5 L326.1 395.7 L326.3 395.9 L327.0 395.6 L328.3 394.9 L329.5 394.3 L330.8 393.6 L331.5 393.5 L331.7 393.7 L332.0 394.0 L332.2 394.3 L332.4 394.5 L332.6 394.8 L332.8 395.1 L333.0 395.4 L333.2 395.7 L333.5 396.0 L333.7 396.3 L333.9 396.6 L333.4 397.3 L332.4 398.5 L331.3 399.6 L330.2 400.7 L330.2 401.1 L330.4 401.3 L330.6 401.6 L330.7 401.9 L330.9 402.2 L331.1 402.5 L331.3 402.8 L331.4 403.1 L331.6 403.4 L331.8 403.7 L331.9 404.1 L333.2 403.8 L334.9 403.4 L336.5 403.0 L337.5 403.0 L337.7 403.3 L337.9 403.7 L338.1 404.1 L338.2 404.4 L338.4 404.8 L338.6 405.2 L338.7 405.6 L338.9 406.0 L339.1 406.4 L339.1 406.8 L337.6 407.9 L336.1 408.9 L334.6 409.9 L334.7 410.3 L334.8 410.7 L335.0 411.1 L335.1 411.4 L335.3 411.8 L335.4 412.2 L335.5 412.6 L335.7 413.0 L335.8 413.4 L336.4 413.7 L338.3 413.5 L340.2 413.4 L341.6 413.5 L341.7 413.9 L341.8 414.3 L342.0 414.8 L342.1 415.2 L342.2 415.7 L342.3 416.1 L342.4 416.6 L342.6 417.1 L342.4 417.6 L340.6 418.5 L338.8 419.4 L337.7 420.2 L337.8 420.6 L337.9 421.1 L338.0 421.5 L338.1 422.0 L338.2 422.4 L338.3 422.9 L338.4 423.4 L338.4 423.8 L339.8 424.1 L341.9 424.2 L344.0 424.3 L344.2 424.8 L344.3 425.3 L344.4 425.8 L344.5 426.3 L344.5 426.8 L344.6 427.3 L344.7 427.8 L344.8 428.3 L343.7 429.0 L341.6 429.8 L339.6 430.6 L339.6 431.1 L339.7 431.6 L339.7 432.1 L339.8 432.6 L339.8 433.1 L339.9 433.6 L340.0 434.1 L340.0 434.6 L342.1 435.0 L344.3 435.3 L345.6 435.7 L345.7 436.3 L345.7 436.8 L345.8 437.4 L345.8 437.9 L345.8 438.5 L345.9 439.0 L345.9 439.6 L344.5 440.2 L342.3 440.9 L340.5 441.5 L340.5 442.0 L340.6 442.6 L340.6 443.1 L340.6 443.7 L340.6 444.2 L340.6 444.8 L340.7 445.3 L342.1 445.8 L344.4 446.4 L346.2 446.9 L346.2 447.5 L346.2 448.1 L346.2 448.6 L346.2 449.2 L346.2 449.8 L346.2 450.4 L346.2 451.0 L344.2 451.5 L341.8 452.1 L340.7 452.6 L340.7 453.2 L340.6 453.7 L340.6 454.3 L340.6 454.9 L340.6 455.5 L340.6 456.0 L341.1 456.6 L343.5 457.3 L345.9 458.0 L345.9 458.6 L345.9 459.2 L345.9 459.8 L345.8 460.4 L345.8 461.0 L345.8 461.6 L345.7 462.2 L343.6 462.7 L341.1 463.1 L340.1 463.6 L340.0 464.2 L340.0 464.8 L339.9 465.4 L339.9 466.0 L339.8 466.5 L339.8 467.1 L341.1 467.9 L343.5 468.7 L345.1 469.5 L345.0 470.1 L344.9 470.7 L344.8 471.3 L344.8 472.0 L344.7 472.6 L344.6 473.2 L343.6 473.7 L341.1 474.0 L338.9 474.3 L338.8 474.9 L338.8 475.5 L338.7 476.1 L338.6 476.7 L338.5 477.3 L338.4 477.9 L338.9 478.6 L341.3 479.6 L343.5 480.5 L343.4 481.2 L343.3 481.8 L343.2 482.4 L343.1 483.0 L343.0 483.6 L342.9 484.2 L342.3 484.8 L339.7 484.9 L337.2 485.0 L337.0 485.6 L336.9 486.2 L336.8 486.8 L336.7 487.4 L336.6 488.0 L336.4 488.6 L336.7 489.3 L339.1 490.4Z" fill="#5b5b61"/>
<path d="M331.8 486.1 L330.8 490.2 L329.8 494.3 L328.7 498.3 L327.6 502.3 L326.3 506.1 L325.0 510.0 L323.7 513.7 L322.2 517.4 L320.7 520.9 L319.2 524.3 L317.6 527.6 L316.0 530.8 L314.3 533.9 L312.6 536.7 L310.9 539.5 L309.2 542.0 L307.4 544.4 L305.6 546.7 L303.8 548.7 L302.0 550.5 L300.2 552.2 L298.4 553.6 L296.6 554.9 L294.9 555.9 L293.1 556.8 L291.4 557.4 L289.7 557.8 L288.0 558.0 L286.4 558.0 L284.8 557.7 L283.3 557.3 L281.8 556.6 L280.4 555.7 L279.0 554.7 L277.7 553.4 L276.5 551.9 L275.3 550.2 L274.2 548.3 L273.2 546.2 L272.2 544.0 L271.4 541.6 L270.6 539.0 L269.9 536.2 L269.3 533.3 L268.8 530.2 L268.4 527.0 L268.0 523.7 L267.8 520.2 L267.7 516.7 L267.6 513.0 L267.7 509.2 L267.8 505.4 L268.0 501.5 L268.4 497.5 L268.8 493.5 L269.3 489.4 L269.9 485.4 L270.6 481.3 L271.4 477.1 L272.2 473.1 L273.2 469.0 L274.2 464.9 L275.3 460.9 L276.4 456.9 L277.7 453.1 L279.0 449.2 L280.3 445.5 L281.8 441.8 L283.3 438.3 L284.8 434.9 L286.4 431.6 L288.0 428.4 L289.7 425.3 L291.4 422.5 L293.1 419.7 L294.8 417.2 L296.6 414.8 L298.4 412.5 L300.2 410.5 L302.0 408.7 L303.8 407.0 L305.6 405.6 L307.4 404.3 L309.1 403.3 L310.9 402.4 L312.6 401.8 L314.3 401.4 L316.0 401.2 L317.6 401.2 L319.2 401.5 L320.7 401.9 L322.2 402.6 L323.6 403.5 L325.0 404.5 L326.3 405.8 L327.5 407.3 L328.7 409.0 L329.8 410.9 L330.8 413.0 L331.8 415.2 L332.6 417.6 L333.4 420.2 L334.1 423.0 L334.7 425.9 L335.2 429.0 L335.6 432.2 L336.0 435.5 L336.2 439.0 L336.3 442.5 L336.4 446.2 L336.3 450.0 L336.2 453.8 L336.0 457.7 L335.6 461.7 L335.2 465.7 L334.7 469.8 L334.1 473.8 L333.4 477.9 L332.6 482.1Z" fill="#0a122d"/>
<path d="M300 560 C290 566 272 562 264 540 C270 556 286 562 300 556Z" fill="#74747a"/>
<path d="M306 548 L324 508 L331 512 L312 552Z" fill="#6c6c72"/>
<path d="M262.0 420.0 L270.0 349.0 L280.0 340.0 L300.0 336.0 L322.0 334.0 L324.0 334.0 L329.0 335.0 L330.0 337.0 L330.0 341.0 L329.0 342.0 L324.0 343.0 L330.0 345.0 L335.0 346.0 L336.0 348.0 L336.0 352.0 L335.0 353.0 L330.0 354.0 L334.0 356.0 L339.0 357.0 L340.0 359.0 L340.0 363.0 L339.0 364.0 L334.0 365.0 L337.0 367.0 L342.0 368.0 L343.0 370.0 L343.0 374.0 L342.0 375.0 L337.0 376.0 L339.0 378.0 L344.0 379.0 L345.0 381.0 L345.0 385.0 L344.0 386.0 L339.0 387.0 L339.0 389.0 L344.0 390.0 L345.0 392.0 L345.0 396.0 L344.0 397.0 L339.0 398.0 L336.0 400.0 L333.0 410.0 L338.0 420.0 L337.0 428.0 L322.0 428.0 L316.0 470.0 L300.0 466.0 L276.0 470.0 L262.0 476.0Z" fill="#535358"/>
<path d="M300 347.5 L326 349.5" stroke="#38383d" stroke-width="2.6"/>
<path d="M300 345 L326 347" stroke="#78787e" stroke-width="2"/>
<path d="M306 358.5 L332 360.5" stroke="#38383d" stroke-width="2.6"/>
<path d="M306 356 L332 358" stroke="#78787e" stroke-width="2"/>
<path d="M312 369.5 L336 371.5" stroke="#38383d" stroke-width="2.6"/>
<path d="M312 367 L336 369" stroke="#78787e" stroke-width="2"/>
<path d="M316 380.5 L338 382.5" stroke="#38383d" stroke-width="2.6"/>
<path d="M316 378 L338 380" stroke="#78787e" stroke-width="2"/>
<path d="M316 391.5 L338 393.5" stroke="#38383d" stroke-width="2.6"/>
<path d="M316 389 L338 391" stroke="#78787e" stroke-width="2"/>
<path d="M288 402.5 L330 406.5" stroke="#38383d" stroke-width="2.6"/>
<path d="M288 400 L330 404" stroke="#78787e" stroke-width="2"/>
<path d="M276 414.5 L322 418.5" stroke="#38383d" stroke-width="2.6"/>
<path d="M276 412 L322 416" stroke="#78787e" stroke-width="2"/>
<path d="M270 426.5 L298 429.5" stroke="#38383d" stroke-width="2.6"/>
<path d="M270 424 L298 427" stroke="#78787e" stroke-width="2"/>
<path d="M268 438.5 L292 441.5" stroke="#38383d" stroke-width="2.6"/>
<path d="M268 436 L292 439" stroke="#78787e" stroke-width="2"/>
<path d="M266 450.5 L290 453.5" stroke="#38383d" stroke-width="2.6"/>
<path d="M266 448 L290 451" stroke="#78787e" stroke-width="2"/>
<path d="M272 352 C276 342 290 338 300 338 L318 338 L320 348 L306 352 L300 380 L296 400 L280 402 L270 396 Z" fill="#58585e"/>
<circle cx="285" cy="372" r="3" fill="#3d3d42"/>
<path d="M262 470 L278 468 L276 506 L264 512 L262 500 Z" fill="#55555b"/>
<path d="M300 338 L300 309 C300 297 321 297 321 309 L322 340 Z" fill="#505056"/>
<circle cx="313" cy="321" r="1" fill="#8a8a90"/>
<path d="M127 335 L294 330 L300 338 L272 350 L268 400 L262 430 L250 462 L238 470 L230 484 L215 450 L206 424 L130 418 L100 424 L102 400 L127 395 Z" fill="#4b4b50"/>
<path d="M230 470 L250 416 L266 418 L264 470 L255 520 L248 540 L244 524 L240 508 L228 500 Z" fill="#4b4b50"/>
<path d="M202 362 L240 354 L244 360 L206 374 Z" fill="#6b6b72"/>
<path d="M156 390 C156 374 186 372 187 386 L187 398 L156 398 Z" fill="#5d5d63"/>
<path d="M160 398 C160 386 172 384 176 392 L176 398 Z" fill="#2c2d31"/>
<path d="M218 447 L248 444 L252 462 L246 472 L230 476 Z" fill="#f39520"/>
<path d="M222 420 L234 418 L232 436 L222 434 Z" fill="#f39520"/>
<path d="M241 384 L260 383 L258 388 L242 388 Z" fill="#f39520"/>
<path d="M302 424 C310 426 311 440 309 456 L292 456 C296 445 299 432 302 424 Z" fill="#0a122d"/>
<path d="M301 423 C298 432 295 445 290 456 L294 456 C298 446 301 434 304 424 Z" fill="#f39520"/>
<path d="M243 352 L264 350 L264 372 L244 372 Z" fill="#0a122d"/>
<path d="M176 354 L204 354 L204 375 L195 374 Z" fill="#1b8dc2"/>
<path d="M234 354 L246 354 L244 363 L238 362 Z" fill="#1b8dc2"/>
<path d="M130 352 L155 352 L155 363 L130 363 Z" fill="#2a2b2f"/>
<path d="M142 352 L155 352 L155 363 L142 363 Z" fill="#35363a"/>
<path d="M127.4 327.7 L141 307 L166 306 L264 316 L268 320 L293 323.6 L293 332.7 L275 336 L235.4 347.5 L233.7 353.3 L205.7 352.5 L204 347.5 L153 337.6 L127.4 336 Z" fill="#f08e1c"/>
<path d="M127.4 327.7 L141 307 L166 306 L264 316 L268 320 L293 323.6 L235.4 340 L204 341 Z" fill="#f6a235"/>
<path d="M166 306 C160 318 157 326 157 329 C190 345 240 345 268 329 C266 320 265 312 266 303 C240 312 190 312 166 306Z" fill="#f39622"/>
<path d="M166 306 C190 314 240 314 266 303 L266 298 C240 310 190 310 166 300Z" fill="#f49a26"/>
<ellipse cx="216" cy="300" rx="50" ry="8.5" fill="#f7a030"/>
<ellipse cx="214" cy="291.5" rx="38" ry="8.8" fill="#f4a240"/>
<ellipse cx="214" cy="289.5" rx="34" ry="6.5" fill="#f8bb72"/>
<circle cx="216.5" cy="324" r="1.3" fill="#fff2d0"/>
<path d="M128 321 C128 311.9 154 311.9 154 321 L154 324.25 C154 329.125 128 329.125 128 324.25 Z" fill="url(#bl)"/><path d="M134.5 317.425 L147.5 317.425" stroke="#5a5e66" stroke-width="1.2"/>
<path d="M205 338 C205 327.5 233 327.5 233 338 L233 341.75 C233 347.375 205 347.375 205 341.75 Z" fill="url(#bl)"/><path d="M212.0 333.875 L226.0 333.875" stroke="#5a5e66" stroke-width="1.2"/>
<path d="M267.2 318 C267.2 308.9 291.8 308.9 291.8 318 L291.8 321.25 C291.8 326.125 267.2 326.125 267.2 321.25 Z" fill="url(#bl)"/><path d="M273.35 314.425 L285.65 314.425" stroke="#5a5e66" stroke-width="1.2"/>
<path d="M106 368 L126 361 L131 366 L118 372 L117 392 L122 400 L119 404 L112 396 L107 388 Z" fill="#f39320"/>
<path d="M100 376 C100 366 108 364 111 368 L111 388 C108 393 101 392 100 386Z" fill="#232428"/>
<path d="M117 374 L129 369 L141 374 L141 392 L129 398 L117 392 Z" fill="url(#bl)"/>
<path d="M121 377 L129 374 L137 377 L137 389 L129 393 L121 389 Z" fill="none" stroke="#50545b" stroke-width="1"/>
<path d="M105 400 L138 397 L140 408 L106 410 Z" fill="#5e5e64"/>
<path d="M138 397 L164 396 L166 407 L140 408 Z" fill="#5a5a60"/>
<path d="M243 389 L262 387 L270 392 L262 401 L246 400 Z" fill="#78787e"/>
<path d="M192 383 C192 377 199 377 199 383 C199 389 192 389 192 383Z" fill="#1e1f22"/>
<path d="M96 426 L102 419 L130 417 L174 422 L198 420 L206 424 L215 450 L225.6 469.6 L230 486 L228.6 501 L236 510 L239 522 L233 528 L202 514 L190 520 L166 522 L142 512 L120 488 L112 466 L102 452 L96 440 Z" fill="#f39320"/>
<path d="M110 450 C112 432 150 428 186 444 C214 458 232 488 224 506 C210 526 162 524 140 506 C122 490 110 470 110 450Z" fill="#f89b22" stroke="#dc7f18" stroke-width="1.2"/>
<path d="M120 448 C130 436 160 438 180 448" fill="none" stroke="#fbb454" stroke-width="1.5"/>
<path d="M138 430 L162 428 L176 436 L150 440Z" fill="#f9a535"/>
<path d="M122 490 C132 508 160 524 190 520 L166 522 L142 512Z" fill="#e2821a"/>
<path d="M209 435 C218 455 228 475 234.6 504 L231 505 C224 478 214 456 206 437Z" fill="#3a3a3e"/>
<g transform="rotate(-20 105.5 436)"><ellipse cx="105.5" cy="436" rx="11.5" ry="10" fill="#1c1d20"/><ellipse cx="107.0" cy="436.8" rx="7.13" ry="6.2" fill="none" stroke="#4b4f56" stroke-width="1.3"/><path d="M102.05 437.0 L110.675 439.5" stroke="#7a7e86" stroke-width="1.2"/><ellipse cx="103.2" cy="431.5" rx="5.75" ry="1.7999999999999998" fill="#3c3f45"/></g>
<g transform="rotate(-20 188 440)"><ellipse cx="188" cy="440" rx="13.5" ry="12" fill="#1c1d20"/><ellipse cx="189.5" cy="440.8" rx="8.37" ry="7.4399999999999995" fill="none" stroke="#4b4f56" stroke-width="1.3"/><path d="M183.95 441.2 L194.075 444.2" stroke="#7a7e86" stroke-width="1.2"/><ellipse cx="185.3" cy="434.6" rx="6.75" ry="2.16" fill="#3c3f45"/></g>
<g transform="rotate(-25 222 517.5)"><ellipse cx="222" cy="517.5" rx="11.5" ry="10.5" fill="#1c1d20"/><ellipse cx="223.5" cy="518.3" rx="7.13" ry="6.51" fill="none" stroke="#4b4f56" stroke-width="1.3"/><path d="M218.55 518.55 L227.175 521.175" stroke="#7a7e86" stroke-width="1.2"/><ellipse cx="219.7" cy="512.775" rx="5.75" ry="1.89" fill="#3c3f45"/></g>
<path d="M268 470 C270 456 300 450 314 462 L316 500 C304 518 280 518 268 504 Z" fill="#616167"/>
<path d="M272 466 C280 456 300 454 310 462" fill="none" stroke="#77777d" stroke-width="2"/>
<path d="M262 470 L276 468 L280 500 L266 506 Z" fill="#56565c"/>
<ellipse cx="305.5" cy="488.5" rx="9" ry="12.5" fill="url(#bl)"/>
<ellipse cx="307" cy="489" rx="4" ry="6" fill="#5a5d63"/>
<path d="M248 476 l9 -1 l1 4 l-9 1z" fill="#77777d"/>
<path d="M247 490 l9 -1 l1 4 l-9 1z" fill="#77777d"/>
<path d="M246 504 l9 -1 l1 4 l-9 1z" fill="#77777d"/>
<path d="M247 518 l9 -1 l1 4 l-9 1z" fill="#77777d"/>
<path d="M249 532 l9 -1 l1 4 l-9 1z" fill="#77777d"/>
<path d="M253 546 l9 -1 l1 4 l-9 1z" fill="#77777d"/>
<path d="M332.5 567.5 L332.5 583 L336 579.8 L338.6 585.4 L340.8 584.4 L338.2 578.8 L342.6 578.6 Z" fill="#fff" stroke="#111" stroke-width="0.9" stroke-linejoin="round"/>
</svg>
<!-- SECTIONS -->
<div class="sec-bar abs" style="left:458px;top:81px"></div>
<div class="sec-num abs" style="left:471px;top:80px">04</div>
<div class="sec-by abs" style="left:505px;top:78px">Created by Sun Huapeng</div>
<div class="sec-tt abs" style="left:505px;top:92px">零件状态检测</div>
<div class="list abs" style="top:113px">
<div class="row" style="top:0px"><span class="n">盖径向发动机橙色垫</span><span class="s">正常</span></div>
<div class="row" style="top:28px"><span class="n">洗涤器径向发动机橙色垫</span><span class="s">正常</span></div>
<div class="row" style="top:56px"><span class="n">环形径向发动机橙色垫</span><span class="s">正常</span></div>
<div class="row" style="top:84px"><span class="n">手套指无环径向发动机手套垫</span><span class="s">正常</span></div>
<div class="row" style="top:112px"><span class="n">板式径向发动机灰垫</span><span class="s">正常</span></div>
<div class="row" style="top:140px"><span class="n">活塞径向发动机橙色垫</span><span class="s">正常</span></div>
<div class="row" style="top:168px"><span class="n">垫圈1径向发动机橙色垫</span><span class="s">正常</span></div>
<div class="row" style="top:196px"><span class="n">盖径向发动机橙色垫0_1</span><span class="s">正常</span></div>
<div class="row" style="top:224px"><span class="n">多边形曲面径向发动机橙色垫0_1</span><span class="s">正常</span></div>
<div class="row" style="top:252px"><span class="n">板式径向发动机灰色垫0_2</span><span class="s">正常</span></div>
<div class="row" style="top:280px"><span class="n">环形径向发动机橙色垫0_2</span><span class="s">正常</span></div>
<div class="row" style="top:308px"><span class="n">盖径向发动机橙色垫</span><span class="s">正常</span></div>
<div class="sb"><div class="up"></div><div class="thumb"></div><div class="dn"></div></div>
</div>
<div class="sec-bar abs" style="left:458px;top:444px"></div>
<div class="sec-num abs" style="left:471px;top:443px">05</div>
<div class="sec-by abs" style="left:505px;top:441px">Created by Sun Huapeng</div>
<div class="sec-tt abs" style="left:505px;top:455px">配件状态检测</div>
<div class="list abs" style="top:476px">
<div class="row" style="top:0px"><span class="n">盖径向发动机橙色垫</span><span class="s">正常</span></div>
<div class="row" style="top:28px"><span class="n">洗涤器径向发动机橙色垫</span><span class="s">正常</span></div>
<div class="row" style="top:56px"><span class="n">环形径向发动机橙色垫</span><span class="s">正常</span></div>
<div class="row" style="top:84px"><span class="n">手套指无环径向发动机手套垫</span><span class="s">正常</span></div>
<div class="row" style="top:112px"><span class="n">板式径向发动机灰垫</span><span class="s">正常</span></div>
<div class="row" style="top:140px"><span class="n">活塞径向发动机橙色垫</span><span class="s">正常</span></div>
<div class="row" style="top:168px"><span class="n">垫圈1径向发动机橙色垫</span><span class="s">正常</span></div>
<div class="row" style="top:196px"><span class="n">盖径向发动机橙色垫0_1</span><span class="s">正常</span></div>
<div class="row" style="top:224px"><span class="n">多边形曲面径向发动机橙色垫0_1</span><span class="s">正常</span></div>
<div class="row" style="top:252px"><span class="n">板式径向发动机灰色垫0_2</span><span class="s">正常</span></div>
<div class="row" style="top:280px"><span class="n">环形径向发动机橙色垫0_2</span><span class="s">正常</span></div>
<div class="row" style="top:308px"><span class="n">盖径向发动机橙色垫</span><span class="s">正常</span></div>
<div class="sb"><div class="up"></div><div class="thumb"></div><div class="dn"></div></div>
</div>
<div id="dt" class="abs">
 <div class="abs" style="left:0;top:0;width:1px;height:798px;background:#d9e4f6"></div>
 <div class="abs" style="left:1px;top:0;width:337px;height:27px;background:#eceff6;border-bottom:1px solid #dfe3ea"></div>
 <div class="abs" style="left:1px;top:27px;width:337px;height:28px;background:#fbfbfd;border-bottom:1px solid #e0e3e8"></div>
 <svg class="abs" style="left:0;top:0" width="338" height="56" viewBox="754 0 338 56">
  <g fill="none" stroke="#474747" stroke-width="1.5">
   <path d="M764.8 7.6h13.2M764.8 7.6v13M777.8 7.6v3.6M764.8 20.4h4.8" stroke-dasharray="1.5 1.5"/>
   <path d="M770.6 13.6h7.4M770.6 13.6v6.8M770.6 13.6l7.2 7"/>
   <path d="M791.2 19.4h8.6M792.2 19.4V8.6h14"/>
   <rect x="800.8" y="11.6" width="5.6" height="8.2" rx="1"/>
   <rect x="764.8" y="34.8" width="12.8" height="12.6" rx="1.5"/>
   <path d="M769.2 34.8v12.6"/>
   <circle cx="799.1" cy="41" r="6.4"/>
   <path d="M803.6 36.5l-9 9"/>
   <path d="M883.8 41.2c4.8-7 12.8-7 17.6 0c-4.8 7-12.8 7-17.6 0z"/>
   <circle cx="892.6" cy="41.2" r="2.6"/>
  </g>
  <path d="M772.2 38.2l3.4 3-3.4 3z" fill="#474747"/>
  <path d="M855.4 38h7.6l-3.8 5.4z" fill="#474747"/>
  <g stroke="#d3d7de" stroke-width="1">
   <path d="M817.5 5.5v16.5M817.5 32.5v19M873.5 33v17M910.5 33v17"/>
  </g>
  <rect x="900" y="25" width="70" height="2.4" fill="#1a5fd2"/>
  <rect x="918.5" y="32.5" width="190" height="18" rx="4" fill="#fff" stroke="#9ea3aa" stroke-width="1"/>
 </svg>
 <div class="abs tab" style="left:81px;top:7px;color:#3c3c3c">Elements</div>
 <div class="abs tab" style="left:157px;top:7px;color:#1a5fd2">Console</div>
 <div class="abs tab" style="left:226px;top:7px;color:#3c3c3c">Sources</div>
 <div class="abs tab" style="left:295px;top:7px;color:#3c3c3c">Network</div>
 <div class="abs tab" style="left:73px;top:34px;color:#333">top</div>
 <div class="abs tab" style="left:168px;top:35px;color:#777">Filter</div>
 <!-- messages -->
 <div class="msg abs" style="top:59px;height:30px"></div>
 <svg class="abs" style="left:12.5px;top:63px" width="13" height="11" viewBox="0 0 12 11" preserveAspectRatio="none"><path d="M6 0.3L11.8 10.6H0.2z" fill="#e0602c"/><rect x="5.3" y="3.4" width="1.4" height="3.8" fill="#fff"/><rect x="5.3" y="8" width="1.4" height="1.4" fill="#fff"/></svg>
 <div class="abs" style="left:34px;top:65px;width:0;height:0;border-top:3.5px solid transparent;border-bottom:3.5px solid transparent;border-left:6px solid #3c3650"></div>
 <div class="mono abs" style="left:42px;top:61px">[ECharts] DEPRECATED: 'normal' hierarchy in itemStyle has been removed since</div>
 <div class="mono abs" style="left:29px;top:75px">4.0. All style properties are configured in itemStyle directly now.</div>
 <div class="msg abs" style="top:94px;height:31px"></div>
 <svg class="abs" style="left:12.5px;top:98px" width="13" height="11" viewBox="0 0 12 11" preserveAspectRatio="none"><path d="M6 0.3L11.8 10.6H0.2z" fill="#e0602c"/><rect x="5.3" y="3.4" width="1.4" height="3.8" fill="#fff"/><rect x="5.3" y="8" width="1.4" height="1.4" fill="#fff"/></svg>
 <div class="abs" style="left:34px;top:100px;width:0;height:0;border-top:3.5px solid transparent;border-bottom:3.5px solid transparent;border-left:6px solid #3c3650"></div>
 <div class="mono abs" style="left:42px;top:96px">[ECharts] DEPRECATED: 'normal' hierarchy in label has been removed since 4.0.</div>
 <div class="mono abs" style="left:29px;top:110px">All style properties are configured in label directly now.</div>
 <div class="msg abs" style="top:131px;height:30px"></div>
 <svg class="abs" style="left:12.5px;top:135px" width="13" height="11" viewBox="0 0 12 11" preserveAspectRatio="none"><path d="M6 0.3L11.8 10.6H0.2z" fill="#e0602c"/><rect x="5.3" y="3.4" width="1.4" height="3.8" fill="#fff"/><rect x="5.3" y="8" width="1.4" height="1.4" fill="#fff"/></svg>
 <div class="abs" style="left:34px;top:137px;width:0;height:0;border-top:3.5px solid transparent;border-bottom:3.5px solid transparent;border-left:6px solid #3c3650"></div>
 <div class="mono abs" style="left:42px;top:133px">[ECharts] DEPRECATED: textStyle hierarchy in label has been removed since 4.0.</div>
 <div class="mono abs" style="left:29px;top:147px">All textStyle properties are configured in label directly now.</div>
 <div class="msg abs" style="top:166px;height:17px"></div>
 <svg class="abs" style="left:12.5px;top:170px" width="13" height="11" viewBox="0 0 12 11" preserveAspectRatio="none"><path d="M6 0.3L11.8 10.6H0.2z" fill="#e0602c"/><rect x="5.3" y="3.4" width="1.4" height="3.8" fill="#fff"/><rect x="5.3" y="8" width="1.4" height="1.4" fill="#fff"/></svg>
 <div class="abs" style="left:34px;top:172px;width:0;height:0;border-top:3.5px solid transparent;border-bottom:3.5px solid transparent;border-left:6px solid #3c3650"></div>
 <div class="mono abs" style="left:42px;top:168px">[ECharts] DEPRECATED: itemStyle.normal.label is deprecated, use label instead.</div>
 <div class="msg abs" style="top:188px;height:17px"></div>
 <svg class="abs" style="left:12.5px;top:192px" width="13" height="11" viewBox="0 0 12 11" preserveAspectRatio="none"><path d="M6 0.3L11.8 10.6H0.2z" fill="#e0602c"/><rect x="5.3" y="3.4" width="1.4" height="3.8" fill="#fff"/><rect x="5.3" y="8" width="1.4" height="1.4" fill="#fff"/></svg>
 <div class="abs" style="left:34px;top:194px;width:0;height:0;border-top:3.5px solid transparent;border-bottom:3.5px solid transparent;border-left:6px solid #3c3650"></div>
 <div class="mono abs" style="left:42px;top:190px">[ECharts] DEPRECATED: barBorderColor is deprecated, use borderColor instead.</div>
 <div class="msg abs" style="top:210px;height:16px"></div>
 <svg class="abs" style="left:12.5px;top:214px" width="13" height="11" viewBox="0 0 12 11" preserveAspectRatio="none"><path d="M6 0.3L11.8 10.6H0.2z" fill="#e0602c"/><rect x="5.3" y="3.4" width="1.4" height="3.8" fill="#fff"/><rect x="5.3" y="8" width="1.4" height="1.4" fill="#fff"/></svg>
 <div class="abs" style="left:34px;top:216px;width:0;height:0;border-top:3.5px solid transparent;border-bottom:3.5px solid transparent;border-left:6px solid #3c3650"></div>
 <div class="mono abs" style="left:42px;top:212px">[ECharts] DEPRECATED: barBorderWidth is deprecated, use borderWidth instead.</div>
 <div class="msg abs" style="top:302px;height:33px"></div>
 <svg class="abs" style="left:12.5px;top:308px" width="13" height="11" viewBox="0 0 12 11" preserveAspectRatio="none"><path d="M6 0.3L11.8 10.6H0.2z" fill="#e0602c"/><rect x="5.3" y="3.4" width="1.4" height="3.8" fill="#fff"/><rect x="5.3" y="8" width="1.4" height="1.4" fill="#fff"/></svg>
 <div class="abs" style="left:34px;top:310px;width:0;height:0;border-top:3.5px solid transparent;border-bottom:3.5px solid transparent;border-left:6px solid #3c3650"></div>
 <div class="mono abs" style="left:42px;top:306px">[ECharts] DEPRECATED: hoverAnimation is deprecated, use emphasis.scale</div>
 <div class="mono abs" style="left:29px;top:320px">instead.</div>
 <div class="abs" style="left:34px;top:258px;width:0;height:0;border-top:3.5px solid transparent;border-bottom:3.5px solid transparent;border-left:6px solid #3c3650"></div>
 <div class="mono abs" style="left:45px;top:248px;font-style:italic"><span style="color:#222">ProgressEvent</span>  <span style="color:#888">{isTrusted: </span><span style="color:#1a4a8a">false</span><span style="color:#888">, lengthComputable: false, loaded: 0}</span></div>
 <div class="mono abs" style="left:51px;top:262px;font-style:italic"><span style="color:#c0282b">'progress'</span><span style="color:#888">,</span>  <span style="color:#222">…}</span></div>
 <div class="abs" style="left:29px;top:280px;width:309px;height:1px;background:#e1e4ea"></div>
 <div class="mono abs" style="left:29px;top:285px">100% loaded</div>
 <svg class="abs" style="left:12px;top:344px" width="8" height="12" viewBox="0 0 8 12"><path d="M1.5 2.2L5.6 6L1.5 9.8" fill="none" stroke="#4a78d8" stroke-width="1.3"/></svg>
 <div class="abs" style="left:2px;top:784px;width:336px;height:1px;background:#dfe2e7"></div>
 <div class="abs" style="left:6px;top:789px;width:400px;height:20px;border:1px solid #a8adb4;border-radius:5px;background:#fff"></div>
 <div class="abs" style="left:10px;top:793px;font-size:13px;color:#333;white-space:nowrap;letter-spacing:0.6px">"3bfdd2ff-74ae-435e-9626-1bfe73266f3"</div>
 <div class="abs" style="left:173px;top:768px;font-family:'Liberation Serif',serif;font-size:17.8px;color:rgba(110,110,110,0.7);white-space:nowrap">@稀土掘金技术社区</div>
</div>
</body>
</html>
